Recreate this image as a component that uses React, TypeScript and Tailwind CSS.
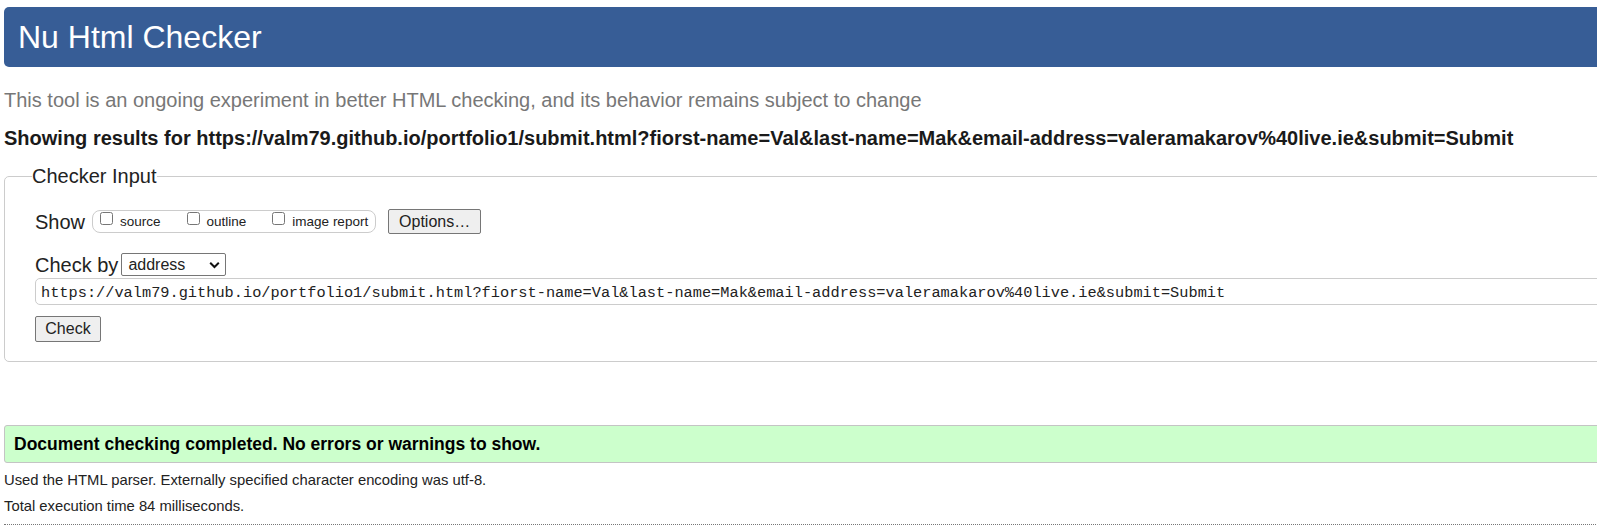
export default function App() {
  const url =
    "https://valm79.github.io/portfolio1/submit.html?fiorst-name=Val&last-name=Mak&email-address=valeramakarov%40live.ie&submit=Submit";

  return (
    <div className="w-full overflow-hidden bg-white font-['Liberation_Sans',Arial,sans-serif] text-[#222]">
      <div className="w-[1640px] pl-[4px] pt-[7px] pb-[8px]">
        {/* header */}
        <h1 className="flex h-[60px] items-center rounded-[5px] bg-[#375d96] pl-[14px] text-[32px] font-normal text-white">
          Nu Html Checker
        </h1>

        <p className="mt-[22px] text-[20px] leading-[23px] text-[#777]">
          This tool is an ongoing experiment in better HTML checking, and its behavior remains subject to change
        </p>

        <p className="mt-[15px] text-[20px] font-bold leading-[23px] text-[#1a1a1a]">
          Showing results for {url}
        </p>

        {/* checker input */}
        <fieldset className="mt-[15px] rounded-[5px] border border-[#ccc] pl-[30px] pb-[19px]">
          <legend className="-ml-[3px] text-[20px] leading-[23px]">Checker Input</legend>

          <div className="mt-[21px] flex h-[25px] items-center">
            <span className="text-[20px]">Show</span>
            <div className="ml-[7px] flex h-[23px] items-start rounded-[8px] border border-[#ccc] pl-[4px] pr-[7px] pt-[1px] text-[13.5px]">
              <label className="flex items-start">
                <input type="checkbox" className="mx-[3px] my-0 h-[13px] w-[13px]" />
                <span className="ml-[4px] mt-[2px] leading-[16px]">source</span>
              </label>
              <label className="ml-[23px] flex items-start">
                <input type="checkbox" className="mx-[3px] my-0 h-[13px] w-[13px]" />
                <span className="ml-[4px] mt-[2px] leading-[16px]">outline</span>
              </label>
              <label className="ml-[23px] flex items-start">
                <input type="checkbox" className="mx-[3px] my-0 h-[13px] w-[13px]" />
                <span className="ml-[4px] mt-[2px] leading-[16px]">image report</span>
              </label>
            </div>
            <button className="ml-[12px] flex h-[25px] w-[93px] items-center justify-center rounded-[2px] border border-[#767676] bg-[#efefef] text-[16px]">
              Options…
            </button>
          </div>

          <div className="mt-[19px] flex h-[23px] items-center">
            <span className="text-[20px]">Check by</span>
            <div className="ml-[3px] flex h-[23px] w-[105px] items-center justify-between rounded-[2px] border border-[#767676] bg-white pl-[6px] pr-[5px] text-[16px]">
              <span>address</span>
              <svg width="11" height="8" viewBox="0 0 11 8" fill="none">
                <path d="M1.2 1.8 5.5 6 9.8 1.8" stroke="#111" strokeWidth="2" />
              </svg>
            </div>
          </div>

          <div className="mt-[2px] flex h-[27px] items-center rounded-[5px] border border-[#ccc] bg-white pl-[5px] pt-[3px] font-['Liberation_Mono',monospace] text-[15.3px]">
            {url}
          </div>

          <button className="mt-[11px] flex h-[26px] w-[66px] items-center justify-center rounded-[2px] border border-[#767676] bg-[#efefef] text-[16px]">
            Check
          </button>
        </fieldset>

        {/* result */}
        <div className="mt-[63px] flex h-[38px] items-center rounded-[3px] border border-[#c4c4c4] bg-[#ccffcc] pl-[9px] text-[17.5px] font-bold text-black">
          Document checking completed. No errors or warnings to show.
        </div>

        <p className="mt-[9px] text-[14.8px] leading-[17px]">
          Used the HTML parser. Externally specified character encoding was utf-8.
        </p>
        <p className="mt-[9px] text-[14.8px] leading-[17px]">Total execution time 84 milliseconds.</p>

        <div className="mt-[9px] border-t border-dotted border-[#777]" />
      </div>
    </div>
  );
}
